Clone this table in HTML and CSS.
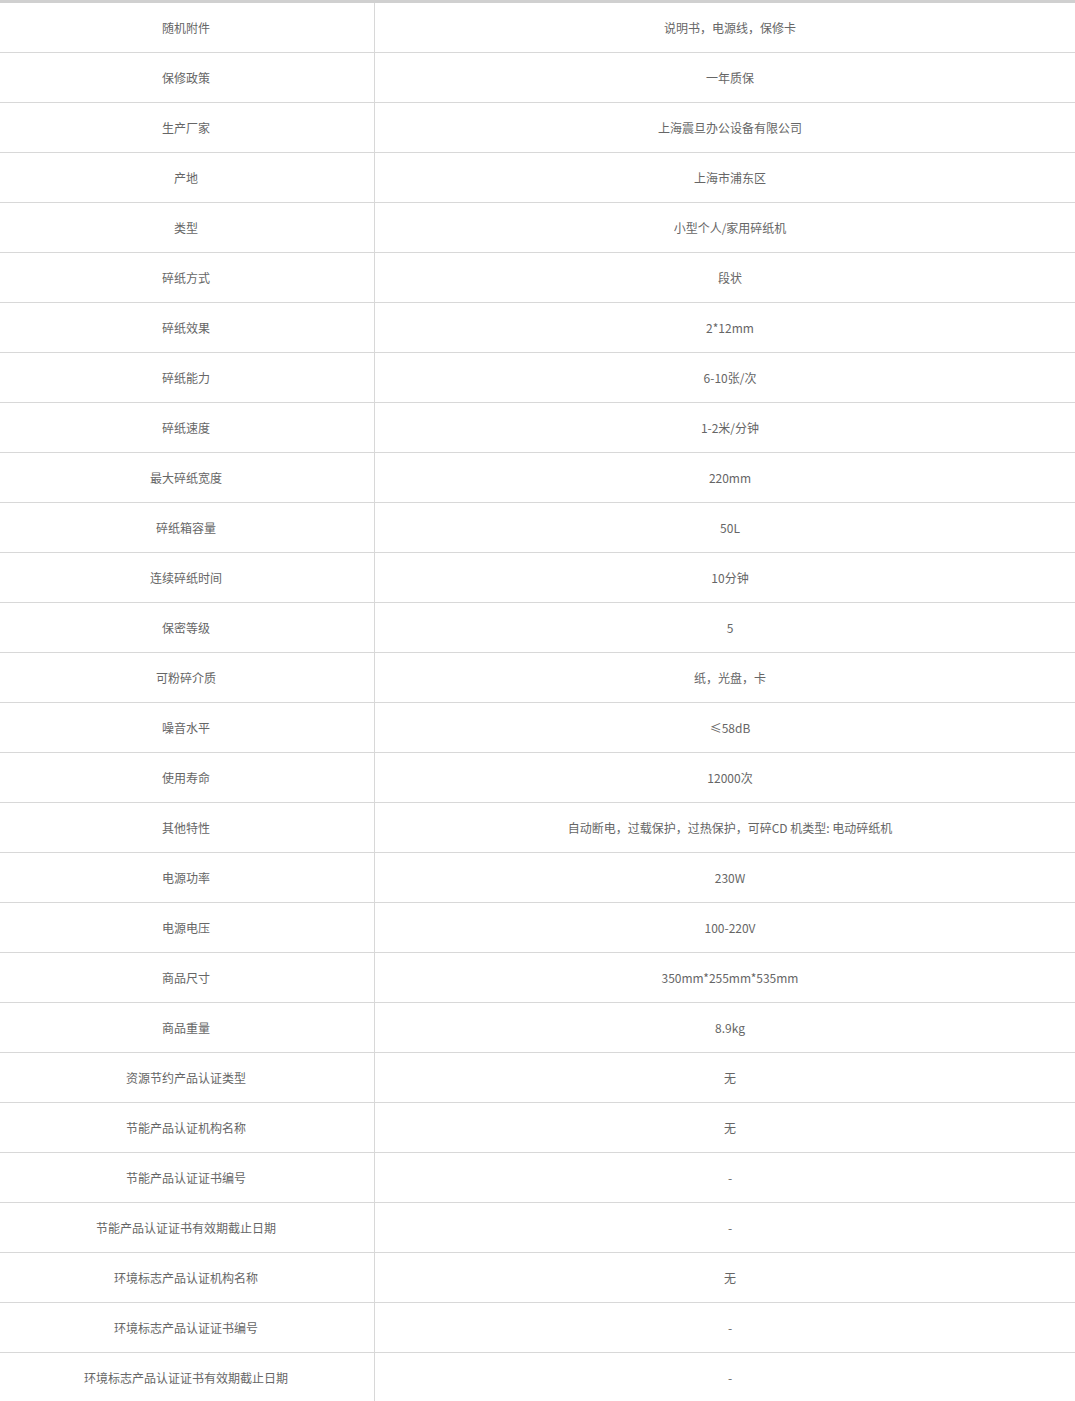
FILE: index.html
```html
<!DOCTYPE html>
<html lang="zh-CN">
<head>
<meta charset="utf-8">
<title>规格参数</title>
<link rel="stylesheet" href="styles.css">
</head>
<body>
<table class="spec">
<tbody>
<tr><td class="k">随机附件</td><td class="v">说明书，电源线，保修卡</td></tr>
<tr><td class="k">保修政策</td><td class="v">一年质保</td></tr>
<tr><td class="k">生产厂家</td><td class="v">上海震旦办公设备有限公司</td></tr>
<tr><td class="k">产地</td><td class="v">上海市浦东区</td></tr>
<tr><td class="k">类型</td><td class="v">小型个人/家用碎纸机</td></tr>
<tr><td class="k">碎纸方式</td><td class="v">段状</td></tr>
<tr><td class="k">碎纸效果</td><td class="v">2*12mm</td></tr>
<tr><td class="k">碎纸能力</td><td class="v">6-10张/次</td></tr>
<tr><td class="k">碎纸速度</td><td class="v">1-2米/分钟</td></tr>
<tr><td class="k">最大碎纸宽度</td><td class="v">220mm</td></tr>
<tr><td class="k">碎纸箱容量</td><td class="v">50L</td></tr>
<tr><td class="k">连续碎纸时间</td><td class="v">10分钟</td></tr>
<tr><td class="k">保密等级</td><td class="v">5</td></tr>
<tr><td class="k">可粉碎介质</td><td class="v">纸，光盘，卡</td></tr>
<tr><td class="k">噪音水平</td><td class="v">≤58dB</td></tr>
<tr><td class="k">使用寿命</td><td class="v">12000次</td></tr>
<tr><td class="k">其他特性</td><td class="v">自动断电，过载保护，过热保护，可碎CD 机类型: 电动碎纸机</td></tr>
<tr><td class="k">电源功率</td><td class="v">230W</td></tr>
<tr><td class="k">电源电压</td><td class="v">100-220V</td></tr>
<tr><td class="k">商品尺寸</td><td class="v">350mm*255mm*535mm</td></tr>
<tr><td class="k">商品重量</td><td class="v">8.9kg</td></tr>
<tr><td class="k">资源节约产品认证类型</td><td class="v">无</td></tr>
<tr><td class="k">节能产品认证机构名称</td><td class="v">无</td></tr>
<tr><td class="k">节能产品认证证书编号</td><td class="v">-</td></tr>
<tr><td class="k">节能产品认证证书有效期截止日期</td><td class="v">-</td></tr>
<tr><td class="k">环境标志产品认证机构名称</td><td class="v">无</td></tr>
<tr><td class="k">环境标志产品认证证书编号</td><td class="v">-</td></tr>
<tr><td class="k">环境标志产品认证证书有效期截止日期</td><td class="v">-</td></tr>
</tbody>
</table>
</body>
</html>
```

FILE: styles.css
```css
html, body {
  margin: 0;
  padding: 0;
  background: #fff;
}
body {
  font-family: "Microsoft YaHei", "Noto Sans CJK SC", "Noto Sans", sans-serif;
  font-size: 12px;
  color: #666;
}
.spec {
  width: 1075px;
  border-collapse: collapse;
  border-top: 3px solid #d0d0d0;
  table-layout: fixed;
}
.spec td {
  height: 49px;
  padding: 0;
  text-align: center;
  vertical-align: middle;
  border-bottom: 1px solid #d8d8d8;
  line-height: 16px;
}
.spec .k {
  width: 372px;
  padding-right: 2px;
  border-right: 1px solid #d8d8d8;
}
.spec .v {
  padding-left: 10px;
}
```
